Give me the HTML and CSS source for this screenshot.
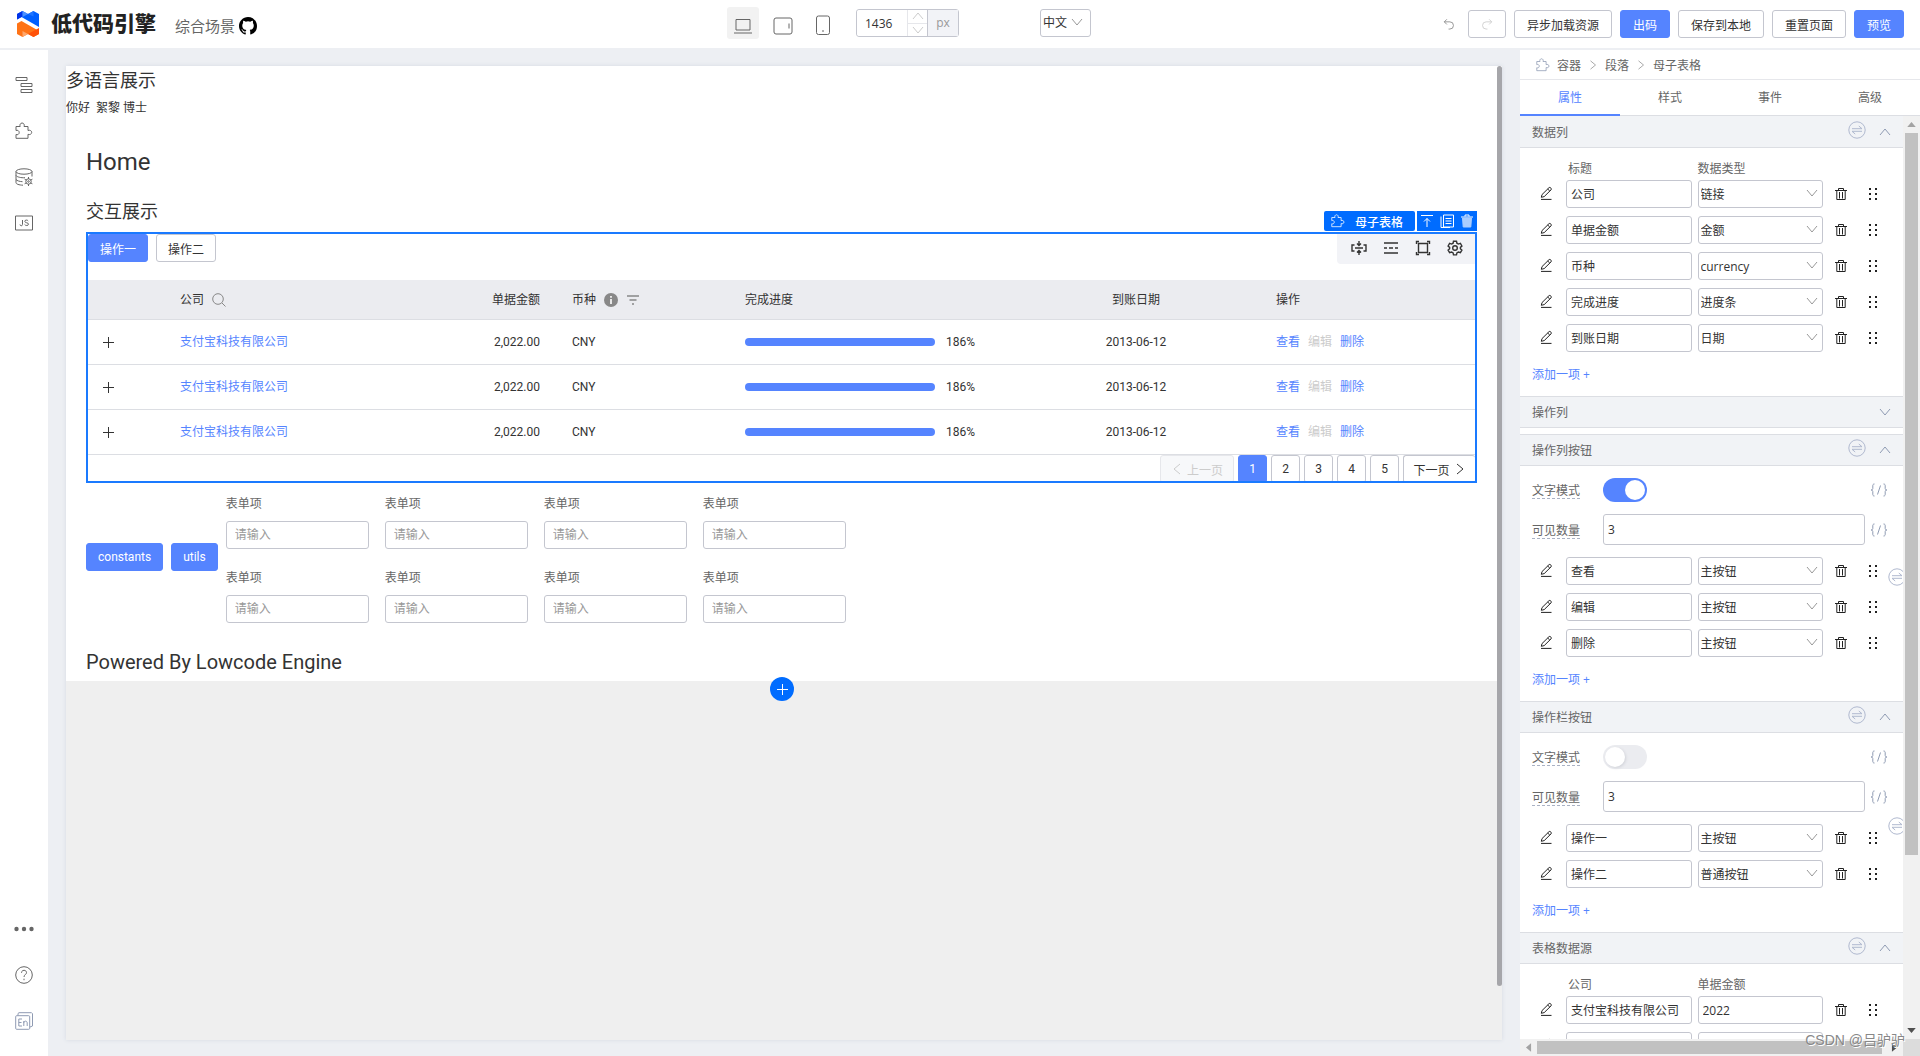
FILE: index.html
```html
<!DOCTYPE html>
<html lang="zh-CN">
<head>
    <meta charset="UTF-8">
    <meta name="viewport" content="width=device-width, initial-scale=1.0">
    <title>低代码引擎</title>
    <link rel="stylesheet" href="styles.css">
</head>
<body>
    <!-- 图标 -->
    <svg class="sprite" xmlns="http://www.w3.org/2000/svg">
        <symbol id="i-edit" viewBox="0 0 14 14"><path d="M2 13.4h10.5M3 8.6 9.900 1.800a1.200 1.200 0 0 1 1.700 0l.4.4a1.200 1.200 0 0 1 0 1.700L5.200 10.600l-2.900.7zM8.700 3l2.100 2.100"/></symbol>
        <symbol id="i-trash" viewBox="0 0 14 14"><path d="M1 3.500h12M4.500 3.200V1.500h5v1.700M2.800 3.500v9h8.400v-9M5.500 5v6.500M8.500 5v6.500"/></symbol>
        <symbol id="i-drag" viewBox="0 0 10 14"><path d="M1 1h2v2H1zM7 1h2v2H7zM1 6h2v2H1zM7 6h2v2H7zM1 11h2v2H1zM7 11h2v2H7z"/></symbol>
        <symbol id="i-down" viewBox="0 0 12 12"><path d="m1 3 5 6 5-6"/></symbol>
        <symbol id="i-up" viewBox="0 0 12 12"><path d="m1 9 5-6 5 6"/></symbol>
        <symbol id="i-left" viewBox="0 0 12 12"><path d="M9 1 3 6l6 5"/></symbol>
        <symbol id="i-right" viewBox="0 0 12 12"><path d="m3 1 6 5-6 5"/></symbol>
        <symbol id="i-swap" viewBox="0 0 18 18"><circle cx="9" cy="9" r="8.200"/><path d="M4 7.700h10l-3.200-2.700M14 10.300H4l3.200 2.700"/></symbol>
        <symbol id="i-bind" viewBox="0 0 18 14"><path d="M4.500 1C2.800 1 2.800 2 2.800 3v2.500C2.800 6.500 2 7 1 7c1 0 1.800.5 1.800 1.500V11c0 1 0 2 1.700 2M13.500 1c1.700 0 1.700 1 1.700 2v2.500C15.200 6.500 16 7 17 7c-1 0-1.800.5-1.800 1.500V11c0 1 0 2-1.700 2M10.500 2.500l-3 9"/></symbol>
        <symbol id="i-puzzle" viewBox="0 0 18 18"><path d="M1 4.500h4.200c-.8-1.700.2-3.500 1.900-3.500s2.700 1.800 1.900 3.500h4v4c1.700-.8 3.700.2 3.700 1.900s-2 2.700-3.700 1.900v4H1v-3.800c1.600.7 3.200-.3 3.200-2s-1.600-2.700-3.200-2z"/></symbol>
    </svg>

    <!-- 顶部栏 -->
    <header class="topbar">
        <div class="topbar-left">
            <svg class="logo" viewBox="0 0 22 26">
                <path d="M0 3 5.500 0 11 3l5.500-3L22 3v13L4.500 6 0 8.500z" fill="#0060ff"/>
                <path d="M0 3 5.500 0v5.500L0 8.500z" fill="#0033e8"/>
                <path d="M5.500 0 11 3 5.500 6z" fill="#4b90ff"/>
                <path d="m11 3 5.500-3v5.500z" fill="#1f75ff"/>
                <path d="M0 12.500 4.500 10 22 20v3l-5.500 3-5.500-3-5.500 3L0 23z" fill="#ff7316"/>
                <path d="m11 23 11-6v6l-5.500 3z" fill="#ff5208"/>
                <path d="m5.500 20 5.500 3-5.500 3z" fill="#ffa66b"/>
            </svg>
            <h1 class="brand">低代码引擎</h1>
            <span class="scene">综合场景</span>
            <a class="github" href="#" aria-label="GitHub">
                <svg viewBox="0 0 16 16"><path d="M8 0C3.580 0 0 3.580 0 8c0 3.540 2.290 6.530 5.470 7.590.4.070.55-.17.55-.38 0-.19-.01-.82-.01-1.490-2.010.37-2.530-.49-2.690-.94-.09-.23-.48-.94-.82-1.130-.28-.15-.68-.52-.01-.53.63-.01 1.080.58 1.230.82.72 1.210 1.870.87 2.330.66.070-.52.28-.87.51-1.070-1.780-.2-3.640-.89-3.640-3.950 0-.87.31-1.590.82-2.150-.08-.2-.36-1.020.08-2.120 0 0 .67-.21 2.200.82a7.600 7.600 0 0 1 4 0c1.530-1.040 2.200-.82 2.200-.82.44 1.100.16 1.920.08 2.120.51.56.82 1.270.82 2.150 0 3.070-1.870 3.750-3.650 3.950.29.25.54.73.54 1.480 0 1.070-.01 1.930-.01 2.200 0 .21.15.46.55.38A8 8 0 0 0 16 8c0-4.420-3.580-8-8-8z"/></svg>
            </a>
        </div>
        <div class="topbar-center">
            <button class="device active" aria-label="桌面"><svg viewBox="0 0 20 20"><path d="M3 4.500h14v10.500H3zM1 18h18"/></svg></button>
            <button class="device" aria-label="平板"><svg viewBox="0 0 20 20"><rect x="1" y="3" width="18" height="16" rx="2"/><path d="M16 8.500v5"/></svg></button>
            <button class="device" aria-label="手机"><svg viewBox="0 0 20 20"><rect x="3.500" y="1" width="13" height="18.500" rx="2"/><path d="M9 16h2"/></svg></button>
            <div class="size-box">
                <input type="text" value="1436" aria-label="画布宽度">
                <span class="stepper">
                    <button aria-label="增加"><svg class="line"><use href="#i-up"/></svg></button>
                    <button aria-label="减少"><svg class="line"><use href="#i-down"/></svg></button>
                </span>
                <span class="unit">px</span>
            </div>
            <div class="select lang">
                <select aria-label="语言"><option>中文</option></select>
                <svg class="line"><use href="#i-down"/></svg>
            </div>
        </div>
        <div class="topbar-right">
            <button class="undo" aria-label="撤销"><svg viewBox="0 0 14 14"><path d="M4.500 1.500 1.500 4.500l3 3M1.500 4.500H8a4.200 4.200 0 0 1 0 8.400H6.500"/></svg></button>
            <button class="btn redo" aria-label="重做" disabled><svg viewBox="0 0 14 14"><path d="m9.500 1.500 3 3-3 3M12.500 4.500H6a4.200 4.200 0 0 0 0 8.400h1.500"/></svg></button>
            <button class="btn">异步加载资源</button>
            <button class="btn primary">出码</button>
            <button class="btn">保存到本地</button>
            <button class="btn">重置页面</button>
            <button class="btn primary">预览</button>
        </div>
    </header>

    <div class="workbench">
        <!-- 左侧边栏 -->
        <nav class="sidebar">
            <div class="sidebar-group">
                <button aria-label="大纲树"><svg viewBox="0 0 18 18"><path d="M1 1.500h11v3H1zM6 7.500h11v3H6zM6 13.500h11v3H6z"/></svg></button>
                <button aria-label="组件库"><svg><use href="#i-puzzle"/></svg></button>
                <button aria-label="数据源"><svg viewBox="0 0 18 18"><ellipse cx="9" cy="3.500" rx="8" ry="2.700"/><path d="M1 3.500v11.200c0 1.300 3 2.400 7 2.500M17 3.500v5M1 7.500c1 1.500 5 2.500 9 2.200M1 11.500c1 1.300 3.500 2 6.500 2.200"/><circle cx="13.500" cy="13.500" r="2.700"/><circle cx="13.500" cy="13.500" r=".8"/><path d="M13.500 9v2M13.500 16v2M9.600 11.200l1.800 1M15.600 14.800l1.800 1M9.600 15.800l1.800-1M15.600 12.200l1.800-1"/></svg></button>
                <button aria-label="源码面板"><svg viewBox="0 0 18 18"><path d="M.5 2h17v14H.5zM7.500 6v4.500c0 1.700-2.500 1.700-2.500 0M13.200 7c-.6-1.300-3.400-1.300-3.400.3 0 2 3.700.9 3.700 2.900 0 1.700-3.200 1.700-3.900.2"/></svg></button>
            </div>
            <div class="sidebar-group">
                <button aria-label="更多"><svg viewBox="0 0 18 18"><g class="solid"><circle cx="1.500" cy="9" r="2.200"/><circle cx="9" cy="9" r="2.200"/><circle cx="16.500" cy="9" r="2.200"/></g></svg></button>
                <button aria-label="帮助"><svg viewBox="0 0 18 18"><circle cx="9" cy="9" r="8.300"/><path d="M6.500 6.800c0-3.400 5-3.200 5-.2 0 2-2.500 2-2.500 4.400M9 12.700v1.500"/></svg></button>
                <button class="locale" aria-label="国际化"><svg viewBox="0 0 18 18"><rect x=".7" y="3.700" width="14" height="13.600" rx="1"/><path d="M3 3.500V1.500l1-.8h12.500l1 1V14l-2.500 1M7 7H3.800v7H7M3.800 10.500h2.700M8.800 14V9M8.800 11c0-2.500 3.400-2.500 3.400 0v3"/></svg></button>
            </div>
        </nav>

        <!-- 画布 -->
        <main class="stage">
            <div class="canvas">
                <div class="page">
                    <h2 class="title">多语言展示</h2>
                    <p class="greeting">你好 &nbsp;絮黎 博士</p>
                    <div class="page-body">
                        <h2 class="page-name">Home</h2>
                        <h2 class="title">交互展示</h2>

                        <section class="table-block">
                            <div class="node-tools">
                                <span class="node-name"><svg class="line"><use href="#i-puzzle"/></svg>母子表格</span>
                                <span class="node-actions">
                                    <button aria-label="选择父级"><svg viewBox="0 0 14 14"><path d="M1 1.500h12M7 13V4.500M4 7.500l3-3 3 3"/></svg></button>
                                    <button aria-label="复制"><svg viewBox="0 0 14 14"><path d="M3.500 1h10v12h-10zM1 2.500v11h9M5.500 4.500h6M5.500 7h6M5.500 9.500h6"/></svg></button>
                                    <button aria-label="删除"><svg viewBox="0 0 14 14"><path d="M1 3h12M5 2.500V1h4v1.500"/><path d="M2.500 4h9l-.7 9H3.200z" fill="#a9cdff" stroke="#a9cdff"/></svg></button>
                                </span>
                            </div>
                            <div class="table-bar">
                                <button class="btn primary">操作一</button>
                                <button class="btn">操作二</button>
                                <div class="table-tools">
                                    <button aria-label="列宽"><svg viewBox="0 0 16 16"><path d="M3.500 5H1v6h2.500M12.500 5H15v6h-2.500M8 1v4.500M8 15v-4.500M6 3.500l2 2 2-2M6 12.500l2-2 2 2M4 8h8"/></svg></button>
                                    <button aria-label="密度"><svg viewBox="0 0 16 16"><path d="M1 3h14M1 13h14M1 8h3M6 8h4M12 8h3"/></svg></button>
                                    <button aria-label="全屏"><svg viewBox="0 0 16 16"><path d="M3.500 3.500h9v9h-9zM1.500 4V1.500H4M12 1.500h2.500V4M14.500 12v2.500H12M4 14.500H1.500V12"/></svg></button>
                                    <button aria-label="设置"><svg viewBox="0 0 16 16"><path d="m6.500 1.200-.4 2-1.500.9-2-.7L1.100 6l1.500 1.400v1.400L1.100 10.200l1.500 2.500 2-.7 1.500.9.400 2h3l.4-2 1.500-.9 2 .7 1.500-2.500-1.500-1.400V7.400L14.900 6l-1.500-2.600-2 .7-1.500-.9-.4-2z"/><circle cx="8" cy="8" r="2.300"/></svg></button>
                                </div>
                            </div>
                            <table class="data-table">
                                <colgroup>
                                    <col class="col-expand"><col class="col-company"><col class="col-amount"><col class="col-currency"><col class="col-progress"><col class="col-date"><col>
                                </colgroup>
                                <thead>
                                    <tr>
                                        <th></th>
                                        <th><span class="th-label">公司 <svg class="th-icon" viewBox="0 0 14 14"><circle cx="6" cy="6" r="5.300"/><path d="m10 10 3.500 3.500"/></svg></span></th>
                                        <th class="right">单据金额</th>
                                        <th><span class="th-label">币种 <svg class="th-icon" viewBox="0 0 14 14"><circle cx="7" cy="7" r="7" fill="#888" stroke="none"/><path d="M7 3v1.800M7 6v5" stroke="#fff" stroke-width="1.600"/></svg><svg class="th-icon" viewBox="0 0 14 14"><path d="M1 3h12M3.500 7h7M6 11h2" stroke-width="1.500"/></svg></span></th>
                                        <th>完成进度</th>
                                        <th class="center">到账日期</th>
                                        <th>操作</th>
                                    </tr>
                                </thead>
                                <tbody>
                                    <tr>
                                        <td><button class="expand" aria-label="展开"></button></td>
                                        <td><a href="#">支付宝科技有限公司</a></td>
                                        <td class="right">2,022.00</td>
                                        <td>CNY</td>
                                        <td><div class="progress"><span class="bar"></span>186%</div></td>
                                        <td class="center">2013-06-12</td>
                                        <td><div class="ops"><a href="#">查看</a><a class="disabled">编辑</a><a href="#">删除</a></div></td>
                                    </tr>
                                    <tr>
                                        <td><button class="expand" aria-label="展开"></button></td>
                                        <td><a href="#">支付宝科技有限公司</a></td>
                                        <td class="right">2,022.00</td>
                                        <td>CNY</td>
                                        <td><div class="progress"><span class="bar"></span>186%</div></td>
                                        <td class="center">2013-06-12</td>
                                        <td><div class="ops"><a href="#">查看</a><a class="disabled">编辑</a><a href="#">删除</a></div></td>
                                    </tr>
                                    <tr>
                                        <td><button class="expand" aria-label="展开"></button></td>
                                        <td><a href="#">支付宝科技有限公司</a></td>
                                        <td class="right">2,022.00</td>
                                        <td>CNY</td>
                                        <td><div class="progress"><span class="bar"></span>186%</div></td>
                                        <td class="center">2013-06-12</td>
                                        <td><div class="ops"><a href="#">查看</a><a class="disabled">编辑</a><a href="#">删除</a></div></td>
                                    </tr>
                                </tbody>
                            </table>
                            <div class="pagination">
                                <button class="btn wide" disabled><svg class="line"><use href="#i-left"/></svg>上一页</button>
                                <button class="btn primary">1</button>
                                <button class="btn">2</button>
                                <button class="btn">3</button>
                                <button class="btn">4</button>
                                <button class="btn">5</button>
                                <button class="btn wide next">下一页<svg class="line"><use href="#i-right"/></svg></button>
                            </div>
                        </section>

                        <div class="form-row">
                            <button class="btn primary">constants</button>
                            <button class="btn primary">utils</button>
                            <form class="form-grid">
                                <label>表单项<input type="text" placeholder="请输入"></label>
                                <label>表单项<input type="text" placeholder="请输入"></label>
                                <label>表单项<input type="text" placeholder="请输入"></label>
                                <label>表单项<input type="text" placeholder="请输入"></label>
                                <label>表单项<input type="text" placeholder="请输入"></label>
                                <label>表单项<input type="text" placeholder="请输入"></label>
                                <label>表单项<input type="text" placeholder="请输入"></label>
                                <label>表单项<input type="text" placeholder="请输入"></label>
                            </form>
                        </div>
                        <p class="powered">Powered By Lowcode Engine</p>
                    </div>
                    <button class="add-block" aria-label="添加区块"></button>
                </div>
                <span class="canvas-scroll"></span>
            </div>
        </main>

        <!-- 设置面板 -->
        <aside class="settings">
            <div class="breadcrumb">
                <svg class="line crumb-icon"><use href="#i-puzzle"/></svg>
                <span>容器</span><svg class="line sep"><use href="#i-right"/></svg>
                <span>段落</span><svg class="line sep"><use href="#i-right"/></svg>
                <span>母子表格</span>
            </div>
            <div class="tabs">
                <button class="active">属性</button>
                <button>样式</button>
                <button>事件</button>
                <button>高级</button>
            </div>
            <div class="settings-main">
                <div class="settings-body">
                    <h3 class="group-title first">数据列<svg class="line swap"><use href="#i-swap"/></svg><svg class="line fold"><use href="#i-up"/></svg></h3>
                    <div class="group with-head">
                        <div class="item-head"><span>标题</span><span>数据类型</span></div>
                        <div class="items">
                            <div class="item">
                                <button class="edit" aria-label="编辑"><svg class="line"><use href="#i-edit"/></svg></button>
                                <div class="fields"><input type="text" value="公司" aria-label="标题"><div class="select"><select aria-label="数据类型"><option>链接</option></select><svg class="line"><use href="#i-down"/></svg></div></div>
                                <button aria-label="删除"><svg class="line"><use href="#i-trash"/></svg></button>
                                <button class="drag" aria-label="拖动"><svg><use href="#i-drag"/></svg></button>
                            </div>
                            <div class="item">
                                <button class="edit" aria-label="编辑"><svg class="line"><use href="#i-edit"/></svg></button>
                                <div class="fields"><input type="text" value="单据金额" aria-label="标题"><div class="select"><select aria-label="数据类型"><option>金额</option></select><svg class="line"><use href="#i-down"/></svg></div></div>
                                <button aria-label="删除"><svg class="line"><use href="#i-trash"/></svg></button>
                                <button class="drag" aria-label="拖动"><svg><use href="#i-drag"/></svg></button>
                            </div>
                            <div class="item">
                                <button class="edit" aria-label="编辑"><svg class="line"><use href="#i-edit"/></svg></button>
                                <div class="fields"><input type="text" value="币种" aria-label="标题"><div class="select"><select aria-label="数据类型"><option>currency</option></select><svg class="line"><use href="#i-down"/></svg></div></div>
                                <button aria-label="删除"><svg class="line"><use href="#i-trash"/></svg></button>
                                <button class="drag" aria-label="拖动"><svg><use href="#i-drag"/></svg></button>
                            </div>
                            <div class="item">
                                <button class="edit" aria-label="编辑"><svg class="line"><use href="#i-edit"/></svg></button>
                                <div class="fields"><input type="text" value="完成进度" aria-label="标题"><div class="select"><select aria-label="数据类型"><option>进度条</option></select><svg class="line"><use href="#i-down"/></svg></div></div>
                                <button aria-label="删除"><svg class="line"><use href="#i-trash"/></svg></button>
                                <button class="drag" aria-label="拖动"><svg><use href="#i-drag"/></svg></button>
                            </div>
                            <div class="item">
                                <button class="edit" aria-label="编辑"><svg class="line"><use href="#i-edit"/></svg></button>
                                <div class="fields"><input type="text" value="到账日期" aria-label="标题"><div class="select"><select aria-label="数据类型"><option>日期</option></select><svg class="line"><use href="#i-down"/></svg></div></div>
                                <button aria-label="删除"><svg class="line"><use href="#i-trash"/></svg></button>
                                <button class="drag" aria-label="拖动"><svg><use href="#i-drag"/></svg></button>
                            </div>
                        </div>
                        <button class="add-item">添加一项 +</button>
                    </div>

                    <h3 class="group-title folded">操作列<svg class="line fold"><use href="#i-down"/></svg></h3>

                    <h3 class="group-title">操作列按钮<svg class="line swap"><use href="#i-swap"/></svg><svg class="line fold"><use href="#i-up"/></svg></h3>
                    <div class="group">
                        <div class="prop">
                            <label for="col-text">文字模式</label>
                            <div class="control"><input class="switch" type="checkbox" id="col-text" checked></div>
                            <button class="bind" aria-label="绑定变量"><svg class="line"><use href="#i-bind"/></svg></button>
                        </div>
                        <div class="prop">
                            <label for="col-count">可见数量</label>
                            <div class="control"><input class="count" type="text" id="col-count" value="3"></div>
                            <button class="bind" aria-label="绑定变量"><svg class="line"><use href="#i-bind"/></svg></button>
                        </div>
                        <div class="items">
                            <svg class="line swap list-swap"><use href="#i-swap"/></svg>
                            <div class="item">
                                <button class="edit" aria-label="编辑"><svg class="line"><use href="#i-edit"/></svg></button>
                                <div class="fields"><input type="text" value="查看" aria-label="标题"><div class="select"><select aria-label="按钮类型"><option>主按钮</option></select><svg class="line"><use href="#i-down"/></svg></div></div>
                                <button aria-label="删除"><svg class="line"><use href="#i-trash"/></svg></button>
                                <button class="drag" aria-label="拖动"><svg><use href="#i-drag"/></svg></button>
                            </div>
                            <div class="item">
                                <button class="edit" aria-label="编辑"><svg class="line"><use href="#i-edit"/></svg></button>
                                <div class="fields"><input type="text" value="编辑" aria-label="标题"><div class="select"><select aria-label="按钮类型"><option>主按钮</option></select><svg class="line"><use href="#i-down"/></svg></div></div>
                                <button aria-label="删除"><svg class="line"><use href="#i-trash"/></svg></button>
                                <button class="drag" aria-label="拖动"><svg><use href="#i-drag"/></svg></button>
                            </div>
                            <div class="item">
                                <button class="edit" aria-label="编辑"><svg class="line"><use href="#i-edit"/></svg></button>
                                <div class="fields"><input type="text" value="删除" aria-label="标题"><div class="select"><select aria-label="按钮类型"><option>主按钮</option></select><svg class="line"><use href="#i-down"/></svg></div></div>
                                <button aria-label="删除"><svg class="line"><use href="#i-trash"/></svg></button>
                                <button class="drag" aria-label="拖动"><svg><use href="#i-drag"/></svg></button>
                            </div>
                        </div>
                        <button class="add-item">添加一项 +</button>
                    </div>

                    <h3 class="group-title">操作栏按钮<svg class="line swap"><use href="#i-swap"/></svg><svg class="line fold"><use href="#i-up"/></svg></h3>
                    <div class="group">
                        <div class="prop">
                            <label for="bar-text">文字模式</label>
                            <div class="control"><input class="switch" type="checkbox" id="bar-text"></div>
                            <button class="bind" aria-label="绑定变量"><svg class="line"><use href="#i-bind"/></svg></button>
                        </div>
                        <div class="prop">
                            <label for="bar-count">可见数量</label>
                            <div class="control"><input class="count" type="text" id="bar-count" value="3"></div>
                            <button class="bind" aria-label="绑定变量"><svg class="line"><use href="#i-bind"/></svg></button>
                        </div>
                        <div class="items short">
                            <svg class="line swap list-swap"><use href="#i-swap"/></svg>
                            <div class="item">
                                <button class="edit" aria-label="编辑"><svg class="line"><use href="#i-edit"/></svg></button>
                                <div class="fields"><input type="text" value="操作一" aria-label="标题"><div class="select"><select aria-label="按钮类型"><option>主按钮</option></select><svg class="line"><use href="#i-down"/></svg></div></div>
                                <button aria-label="删除"><svg class="line"><use href="#i-trash"/></svg></button>
                                <button class="drag" aria-label="拖动"><svg><use href="#i-drag"/></svg></button>
                            </div>
                            <div class="item">
                                <button class="edit" aria-label="编辑"><svg class="line"><use href="#i-edit"/></svg></button>
                                <div class="fields"><input type="text" value="操作二" aria-label="标题"><div class="select"><select aria-label="按钮类型"><option>普通按钮</option></select><svg class="line"><use href="#i-down"/></svg></div></div>
                                <button aria-label="删除"><svg class="line"><use href="#i-trash"/></svg></button>
                                <button class="drag" aria-label="拖动"><svg><use href="#i-drag"/></svg></button>
                            </div>
                        </div>
                        <button class="add-item">添加一项 +</button>
                    </div>

                    <h3 class="group-title">表格数据源<svg class="line swap"><use href="#i-swap"/></svg><svg class="line fold"><use href="#i-up"/></svg></h3>
                    <div class="group with-head">
                        <div class="item-head"><span>公司</span><span>单据金额</span></div>
                        <div class="items">
                            <div class="item">
                                <button class="edit" aria-label="编辑"><svg class="line"><use href="#i-edit"/></svg></button>
                                <div class="fields"><input type="text" value="支付宝科技有限公司" aria-label="公司"><input type="text" value="2022" aria-label="单据金额"></div>
                                <button aria-label="删除"><svg class="line"><use href="#i-trash"/></svg></button>
                                <button class="drag" aria-label="拖动"><svg><use href="#i-drag"/></svg></button>
                            </div>
                            <div class="item">
                                <button class="edit" aria-label="编辑"><svg class="line"><use href="#i-edit"/></svg></button>
                                <div class="fields"><input type="text" aria-label="公司"><input type="text" aria-label="单据金额"></div>
                            </div>
                        </div>
                    </div>
                </div>
                <div class="scroll-y"><i class="arrow up"></i><span></span><i class="arrow down"></i></div>
                <div class="scroll-x"><i class="arrow left"></i><span></span><i class="arrow right"></i></div>
                <div class="scroll-corner"></div>
            </div>
            <span class="watermark">CSDN @吕驴驴</span>
        </aside>
    </div>
</body>
</html>
```

FILE: styles.css
```css
* {
    box-sizing: border-box;
}
body {
    display: flex;
    flex-direction: column;
    height: 100vh;
    margin: 0;
    overflow: hidden;
    background-color: #edeff3;
    color: #333;
    font-family: Roboto, "Noto Sans CJK SC", sans-serif;
    font-size: 12px;
}
h1, h2, h3, p {
    margin: 0;
    font-weight: 400;
}
a {
    color: #5584ff;
    text-decoration: none;
}
button {
    display: flex;
    align-items: center;
    justify-content: center;
    padding: 0;
    border: 0;
    background: none;
    color: inherit;
    font: inherit;
    cursor: pointer;
}
input, select {
    width: 100%;
    height: 28px;
    margin: 0;
    padding: 0 4px;
    border: 1px solid #c4c6cf;
    border-radius: 3px;
    background-color: #fff;
    color: #333;
    font: inherit;
    outline: none;
    appearance: none;
}
svg {
    flex: none;
    fill: none;
    stroke: currentColor;
}
.sprite {
    position: absolute;
    width: 0;
    height: 0;
}
.line {
    width: 12px;
    height: 12px;
}
.btn {
    height: 28px;
    padding: 0 12px;
    border: 1px solid #c4c6cf;
    border-radius: 3px;
    background-color: #fff;
    white-space: nowrap;
}
.btn.primary {
    border-color: #5584ff;
    background-color: #5584ff;
    color: #fff;
}
.select {
    position: relative;
}
.select svg {
    position: absolute;
    top: 7px;
    right: 5px;
    color: #999;
    pointer-events: none;
}

/* 顶部栏 */
.topbar {
    display: grid;
    grid-template-columns: 727px 1fr auto;
    flex: none;
    height: 48px;
    background-color: #fff;
}
.topbar-left, .topbar-center, .topbar-right {
    display: flex;
    align-items: center;
}
.topbar-left {
    padding-left: 17px;
}
.logo {
    width: 22px;
    height: 26px;
    stroke: none;
}
.brand {
    margin: 0 19px 0 12px;
    color: #222;
    font-size: 21px;
    font-weight: 900;
    line-height: 28px;
}
.scene {
    padding-top: 6px;
    color: #666;
    font-size: 15px;
    line-height: 22px;
}
.github {
    margin-left: 4px;
    padding-top: 4px;
    line-height: 0;
}
.github svg {
    width: 18px;
    height: 18px;
    fill: #000;
    stroke: none;
}
.topbar-center {
    gap: 8px;
    padding-bottom: 2px;
}
.device {
    width: 32px;
    height: 32px;
    padding-top: 4px;
    border-radius: 3px;
    color: #666;
}
.device.active {
    background-color: #f2f2f2;
}
.device svg {
    width: 20px;
    height: 20px;
}
.size-box {
    display: flex;
    width: 103px;
    height: 28px;
    margin-left: 9px;
    border: 1px solid #c4c6cf;
    border-radius: 3px;
    font-family: "Open Sans", sans-serif;
}
.size-box input {
    flex: 1;
    min-width: 0;
    height: 26px;
    padding-left: 8px;
    border: 0;
}
.stepper {
    display: grid;
    width: 20px;
    border-left: 1px solid #e6e7eb;
    color: #ccc;
}
.stepper button + button {
    border-top: 1px solid #e6e7eb;
}
.unit {
    width: 31px;
    border-left: 1px solid #c4c6cf;
    background-color: #f2f3f7;
    color: #999;
    line-height: 26px;
    text-align: center;
}
.lang {
    width: 51px;
    margin-left: 73px;
}
.lang select {
    padding-left: 2px;
}
.lang svg {
    right: 8px;
}
.topbar-right {
    gap: 8px;
    padding-right: 16px;
}
.undo {
    width: 14px;
    margin-right: 4px;
    color: #888;
}
.undo svg, .redo svg {
    width: 12px;
    height: 12px;
}
.redo {
    color: #ccc;
}

/* 左侧边栏 */
.workbench {
    display: flex;
    flex: 1;
    min-height: 0;
}
.sidebar {
    display: flex;
    flex-direction: column;
    justify-content: space-between;
    width: 48px;
    margin-top: 2px;
    padding: 12px 0;
    background-color: #fff;
    color: #666;
}
.sidebar button {
    width: 48px;
    height: 46px;
}
.sidebar svg {
    width: 18px;
    height: 18px;
    overflow: visible;
}
.solid {
    fill: currentColor;
    stroke: none;
}
.locale {
    color: #8f9bb3;
}

/* 画布 */
.stage {
    flex: 1;
    min-width: 0;
    padding: 18px 18px 16px;
}
.canvas {
    position: relative;
    height: 100%;
    background-color: #efefef;
    box-shadow: 0 0 4px #d5d9e2;
}
.canvas-scroll {
    position: absolute;
    top: 0;
    right: 0;
    width: 5px;
    height: 920px;
    border-radius: 3px;
    background-color: #a6a6aa;
}
.page {
    position: relative;
    background-color: #fff;
}
.title {
    font-size: 18px;
    line-height: 30px;
}
.greeting {
    padding-top: 1px;
    line-height: 22px;
}
.page-body {
    padding: 25px 25px 0 20px;
}
.page-name {
    margin-bottom: 17px;
    font-size: 24px;
    line-height: 36px;
}
.table-block {
    position: relative;
    margin-top: 5px;
    border: 2px solid #1a7aff;
}
.node-tools {
    position: absolute;
    right: -2px;
    bottom: 100%;
    display: flex;
    gap: 2px;
    margin-bottom: 3px;
    color: #fff;
}
.node-name, .node-actions {
    display: flex;
    align-items: center;
    height: 20px;
    background-color: #006cff;
}
.node-name {
    gap: 10px;
    padding: 0 12px 0 7px;
    border-radius: 2px;
    font-weight: 500;
}
.node-name svg {
    width: 14px;
    height: 14px;
}
.node-actions button {
    width: 20px;
}
.node-actions svg {
    width: 14px;
    height: 14px;
}
.table-bar {
    display: flex;
    gap: 8px;
    margin-bottom: 18px;
    height: 28px;
}
.table-bar .btn {
    padding: 0 11px;
}
.table-tools {
    display: flex;
    height: 30px;
    margin-left: auto;
    padding: 0 4px 2px 6px;
    border-radius: 0 0 0 4px;
    background-color: #f2f3f7;
}
.table-tools button {
    width: 32px;
}
.table-tools svg {
    width: 16px;
    height: 16px;
    stroke-width: 1.4;
}
.data-table {
    width: 100%;
    border-collapse: separate;
    border-spacing: 0;
    table-layout: fixed;
}
.col-expand {
    width: 76px;
}
.col-company, .col-amount {
    width: 196px;
}
.col-currency {
    width: 173px;
}
.col-progress {
    width: 283px;
}
.col-date {
    width: 248px;
}
th, td {
    height: 45px;
    padding: 0 16px;
    border-bottom: 1px solid #dcdee3;
    font-weight: 400;
    line-height: 20px;
    text-align: left;
}
th {
    height: 40px;
    background-color: #ebecf0;
}
.right {
    text-align: right;
}
.center {
    text-align: center;
}
.th-label {
    display: flex;
    align-items: center;
    gap: 8px;
}
.th-icon {
    width: 14px;
    height: 14px;
    color: #888;
}
.expand {
    position: relative;
    width: 12px;
    height: 12px;
    margin-left: -2px;
}
.expand::before, .expand::after, .add-block::before, .add-block::after {
    content: "";
    position: absolute;
    width: 11px;
    height: 1px;
    background-color: currentColor;
}
.expand::after, .add-block::after {
    width: 1px;
    height: 11px;
}
.progress {
    display: flex;
    align-items: center;
    gap: 11px;
}
.bar {
    width: 190px;
    height: 8px;
    border-radius: 4px;
    background-color: #5584ff;
}
.ops {
    display: flex;
    gap: 8px;
}
.ops .disabled {
    color: #ccc;
}
.pagination {
    display: flex;
    justify-content: flex-end;
    gap: 4px;
    height: 26px;
    overflow: hidden;
}
.pagination .btn {
    width: 29px;
    padding: 0;
}
.pagination .btn.wide {
    gap: 4px;
    width: 74px;
}
.pagination .btn.next {
    width: 72px;
    border-right: 0;
}
.pagination .btn:disabled {
    border-color: #e6e7eb;
    background-color: #f7f8fa;
    color: #ccc;
}
.form-row {
    display: flex;
    align-items: center;
    gap: 8px;
    margin-top: 7px;
}
.form-row .btn {
    padding: 0 11px;
}
.form-grid {
    display: grid;
    grid-template-columns: repeat(4, 143px);
    gap: 19px 16px;
    padding-top: 4px;
}
.form-grid label {
    display: grid;
    gap: 7px;
    color: #666;
    line-height: 20px;
}
.form-grid input {
    padding: 0 8px;
}
.form-grid input::placeholder {
    color: #999;
}
.powered {
    padding-top: 20px;
    font-size: 20px;
    line-height: 38px;
}
.add-block {
    position: absolute;
    bottom: -20px;
    left: 50%;
    width: 24px;
    height: 24px;
    margin-left: -14px;
    border-radius: 50%;
    background-color: #006cff;
    color: #fff;
}

/* 设置面板 */
.settings {
    position: relative;
    display: flex;
    flex-direction: column;
    width: 400px;
    margin-top: 2px;
    background-color: #fff;
    color: #666;
    font-family: "Open Sans", "Noto Sans CJK SC", sans-serif;
}
.breadcrumb {
    display: flex;
    align-items: center;
    gap: 7px;
    height: 30px;
    padding-left: 16px;
    border-bottom: 1px solid #e6e7eb;
}
.crumb-icon {
    width: 14px;
    height: 14px;
    color: #8f9bb3;
}
.sep {
    width: 10px;
    height: 10px;
    color: #999;
}
.tabs {
    display: flex;
    height: 36px;
    border-bottom: 1px solid #dcdee3;
}
.tabs button {
    flex: 1;
    height: 36px;
    border-bottom: 2px solid transparent;
}
.tabs .active {
    border-color: #5584ff;
    color: #5584ff;
}
.settings-main {
    display: grid;
    flex: 1;
    grid-template-columns: 1fr 17px;
    grid-template-rows: 1fr 17px;
    min-height: 0;
}
.settings-body {
    min-height: 0;
    overflow: hidden;
}
.group-title {
    display: flex;
    align-items: center;
    gap: 13px;
    height: 32px;
    padding: 0 12px;
    border-top: 1px solid #dcdee3;
    border-bottom: 1px solid #dcdee3;
    background-color: #f1f3f6;
    font-size: 12px;
}
.group-title.first {
    border-top: 0;
}
.group-title.folded {
    margin-bottom: 6px;
}
.swap {
    width: 18px;
    height: 18px;
    margin-left: auto;
    color: #b0b9cf;
}
.group-title .swap {
    margin-bottom: 4px;
}
.fold {
    color: #8f9bb3;
}
.folded .fold {
    margin-left: auto;
}
.group {
    padding-top: 12px;
}
.group.with-head {
    padding-top: 11px;
}
.item-head {
    display: grid;
    grid-template-columns: 1fr 1fr;
    gap: 6px;
    padding: 0 82px 1px 48px;
    line-height: 20px;
}
.items {
    position: relative;
    display: grid;
    gap: 8px;
}
.item {
    display: grid;
    grid-template-columns: 46px 1fr 36px 28px;
    padding-right: 16px;
    color: #222;
}
.item button svg {
    width: 14px;
    height: 14px;
}
.item .edit {
    padding: 0 0 2px 6px;
}
.item .drag svg {
    width: 10px;
    fill: currentColor;
    stroke: none;
}
.fields {
    display: grid;
    grid-template-columns: 1fr 1fr;
    gap: 6px;
}
.fields .select select {
    padding-left: 2px;
}
.list-swap {
    position: absolute;
    top: 11px;
    right: -3px;
}
.short .list-swap {
    top: -7px;
}
.add-item {
    margin: 13px 12px 11px;
    color: #5584ff;
    line-height: 20px;
}
.prop {
    display: grid;
    grid-template-columns: 71px 1fr 38px;
    align-items: center;
    margin-bottom: 12px;
    padding-left: 12px;
}
.prop label {
    text-decoration: underline dashed #aab2c4 1px;
    text-underline-offset: 3px;
}
.control {
    display: flex;
}
.switch {
    position: relative;
    width: 44px;
    height: 24px;
    border: 0;
    border-radius: 12px;
    background-color: #ebecf0;
}
.switch::before {
    content: "";
    position: absolute;
    top: 2px;
    left: 2px;
    width: 20px;
    height: 20px;
    border-radius: 50%;
    background-color: #fff;
    box-shadow: 1px 1px 3px #d0d2d8;
}
.switch:checked {
    background-color: #5584ff;
}
.switch:checked::before {
    left: 22px;
    box-shadow: none;
}
.count {
    height: 31px;
}
.bind {
    padding-right: 10px;
    color: #8f9bb3;
}
.bind svg {
    width: 18px;
    height: 14px;
}

/* 滚动条 */
.scroll-y, .scroll-x {
    display: flex;
    align-items: center;
    justify-content: space-between;
    background-color: #f1f1f1;
}
.scroll-y {
    flex-direction: column;
}
.scroll-y span {
    width: 13px;
    height: 722px;
    margin-bottom: auto;
    background-color: #c1c1c1;
}
.scroll-x span {
    flex: 1;
    height: 13px;
    margin-right: 4px;
    background-color: #c1c1c1;
}
.scroll-corner {
    background-color: #dcdcdc;
}
.arrow {
    width: 17px;
    height: 17px;
    background-color: #505050;
}
.arrow.up {
    background-color: #a3a3a3;
    clip-path: polygon(50% 35%, 25% 65%, 75% 65%);
}
.arrow.down {
    clip-path: polygon(50% 65%, 25% 35%, 75% 35%);
}
.arrow.left {
    background-color: #a3a3a3;
    clip-path: polygon(35% 50%, 65% 25%, 65% 75%);
}
.arrow.right {
    clip-path: polygon(65% 50%, 35% 25%, 35% 75%);
}
.watermark {
    position: absolute;
    right: 15px;
    bottom: 4px;
    color: #888;
    font-family: "Liberation Sans", "Noto Sans CJK SC", sans-serif;
    font-size: 14px;
    line-height: 24px;
    text-shadow: 1px 1px #fff;
}
```
